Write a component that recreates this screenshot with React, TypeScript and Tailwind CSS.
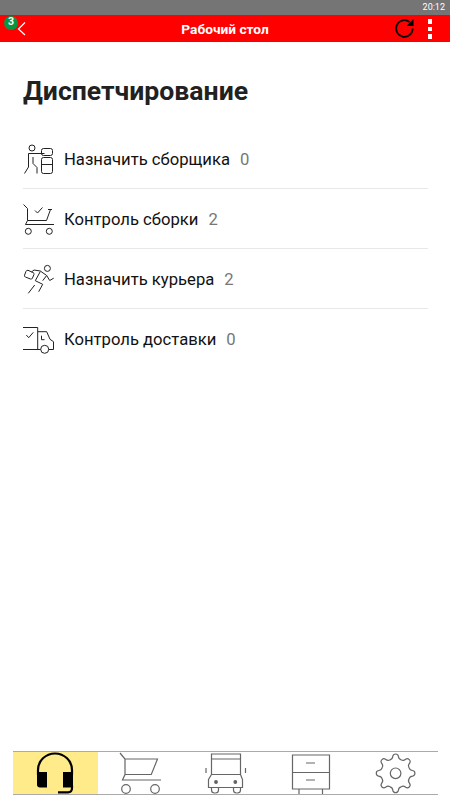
import React from "react";

interface MenuItem {
	title: string;
	count: number;
	icon: React.ReactNode;
}

const menuItems: MenuItem[] = [
	{
		title: "Назначить сборщика",
		count: 0,
		icon: (
			<>
				<circle cx="9" cy="5" r="3" />
				<path d="M21.5 10.5H5.5V24L1.5 30.5M10 14v6.5l4 4v6" />
				<rect x="18.5" y="5.5" width="11" height="7" rx="2" />
				<rect x="18.5" y="14.5" width="11" height="16" rx="2" />
				<path d="M18.5 21.5h11" />
			</>
		),
	},
	{
		title: "Контроль сборки",
		count: 2,
		icon: (
			<>
				<path d="M.5 1.5l4 4v12l-2 4h28.5M4.5 17.5h19l4-11M25 6.5h4M12 7.5l2.5 2.5 5-5.5" />
				<circle cx="5.3" cy="28.3" r="3" />
				<circle cx="26.3" cy="28.3" r="3" />
			</>
		),
	},
	{
		title: "Назначить курьера",
		count: 2,
		icon: (
			<>
				<circle cx="24.4" cy="5.4" r="3" />
				<path d="M5 7.3l5.2 2.3q1.2.7.8 1.8l-1.6 3.8q-.6 1.3-1.9.8L2.3 14q-1.2-.7-.8-1.8L3 8.4q.6-1.4 2-1.1z" />
				<path d="M8.5 9l2.5-2 6.3 1 6.4 4.5 3 5 4-2.3M17.3 8.5l-5 9.2 7.4 3.6-4 7.4M23.5 12.7l-3.8 5M11.7 22l-6.4 8.3" />
			</>
		),
	},
	{
		title: "Контроль доставки",
		count: 0,
		icon: (
			<>
				<path d="M0 4.5h14.7v22M0 26.5h17.7M14.7 8.7h9l3.3 7.6 3.5 2.4v7.8h-4.7M18.5 12.7v4h3M3.3 12l2.4 2.7 4.6-5.4" />
				<circle cx="21.7" cy="26.3" r="4" />
			</>
		),
	},
];

const toothAngles = [0, 45, 90, 135, 180, 225, 270, 315];

const tabs: { id: string; icon: React.ReactNode }[] = [
	{
		id: "dispatch",
		icon: (
			<g stroke="#000" strokeWidth="2.2">
				<path d="M25 24v-5a17 16.5 0 0 1 34 0v5M59 34v3q0 4.3-4 4.3H45" />
				<path
					d="M24 21h10v15.5h-7q-3 0-3-3zM50 21h10v12.5q0 3-3 3h-7z"
					fill="#000"
					stroke="none"
				/>
			</g>
		),
	},
	{
		id: "cart",
		icon: (
			<>
				<path d="M22 2l5 6v15.5l-2.5 5.5h38.5M27 8h32.5l-6.2 15.5H27" />
				<circle cx="28" cy="38" r="4.3" />
				<circle cx="57" cy="38" r="4.3" />
			</>
		),
	},
	{
		id: "delivery",
		icon: (
			<>
				<path d="M28.5 23.5v-20.5h29v20.5zM28.5 8h29M28.5 23.5l-3 5v8h34v-8l-2-5M23 17v5M62.5 17v5" />
				<path d="M28.5 36.5v2.5q0 3 3 3h1q3 0 3-3v-2.5M50.5 36.5v2.5q0 3 3 3h1q3 0 3-3v-2.5" />
				<circle cx="33" cy="31" r="1.3" fill="#5b5b5b" />
				<circle cx="52.3" cy="31" r="1.3" fill="#5b5b5b" />
			</>
		),
	},
	{
		id: "storage",
		icon: (
			<path d="M24.5 4h37v34h-37zM24.5 21.5h37M38 12h9M38 29h9M31 38v5M54.5 38v5" />
		),
	},
	{
		id: "settings",
		icon: (
			<g transform="translate(42.6 22.3)">
				<circle r="5.3" />
				{toothAngles.map((angle) => (
					<path
						key={angle}
						d="M-5.6-13.5Q-3-14-2.8-17A2.85 2.85 0 0 1 2.8-17Q3-14 5.6-13.5"
						transform={`rotate(${angle})`}
					/>
				))}
			</g>
		),
	},
];

const Header: React.FC = () => {
	return (
		<header className="bg-[#ff0000]">
			<div className="flex h-[15px] items-center justify-end bg-[#757575] pr-[5px] text-[9px] leading-none text-white">
				20:12
			</div>
			<div className="relative flex h-[27px] items-center justify-center">
				<h1 className="mt-0.5 text-[13.7px] font-bold text-white">Рабочий стол</h1>
				<svg
					className="absolute left-[17px] top-[7px]"
					width="9"
					height="14"
					fill="none"
					stroke="#fff"
					strokeWidth="1.2"
				>
					<path d="M8 .5l-6.5 6.5 6.5 6" />
				</svg>
				<span className="absolute left-1 top-[0.5px] flex size-[14px] items-center justify-center rounded-full bg-[#079545] text-[10.5px] font-bold leading-none text-white">
					3
				</span>
				<svg className="absolute left-[394px] top-[3px]" width="22" height="22" fill="none">
					<path
						d="M18.7 10.5a8.3 8.3 0 1 1-3-6.4"
						stroke="#000"
						strokeWidth="1.7"
					/>
					<path d="M19.5 1v7h-7z" fill="#000" />
				</svg>
				<div className="absolute left-[428px] top-1 flex flex-col gap-[3px]">
					<i className="h-[5px] w-1 bg-white" />
					<i className="h-1 w-1 bg-white" />
					<i className="h-[5px] w-1 bg-white" />
				</div>
			</div>
		</header>
	);
};

const App: React.FC = () => {
	return (
		<div className="flex h-[800px] w-[450px] flex-col bg-white font-[Roboto,sans-serif]">
			<Header />
			<main className="flex-1 pl-[23px] pr-[22px] pt-[31px]">
				<h2 className="h-9 text-[26.6px] font-bold leading-9 text-[#212121]">
					Диспетчирование
				</h2>
				<ul className="mt-5">
					{menuItems.map((item) => (
						<li
							key={item.title}
							className="flex h-[60px] items-center border-b border-[#e8e8e8] last:border-transparent"
						>
							<svg
								className="mr-[9px] shrink-0"
								width="32"
								height="32"
								fill="none"
								stroke="#222"
								strokeWidth="1"
							>
								{item.icon}
							</svg>
							<span className="mt-1 text-[16.65px] text-[#111]">{item.title}</span>
							<span className="ml-[10px] mt-1 text-[16.65px] text-[#777]">
								{item.count}
							</span>
						</li>
					))}
				</ul>
			</main>
			<nav className="mb-[5px] ml-[13px] mr-3 grid h-11 grid-cols-5 border-y border-[#aaa]">
				{tabs.map((tab) => (
					<button
						key={tab.id}
						className={
							tab.id === "dispatch"
								? "flex h-[42px] items-start bg-[#ffeb8a]"
								: "flex h-[42px] items-start"
						}
					>
						<svg
							className="-mt-px shrink-0"
							width="85"
							height="44"
							fill="none"
							stroke="#666"
							strokeWidth="1.2"
						>
							{tab.icon}
						</svg>
					</button>
				))}
			</nav>
		</div>
	);
};

export default App;
